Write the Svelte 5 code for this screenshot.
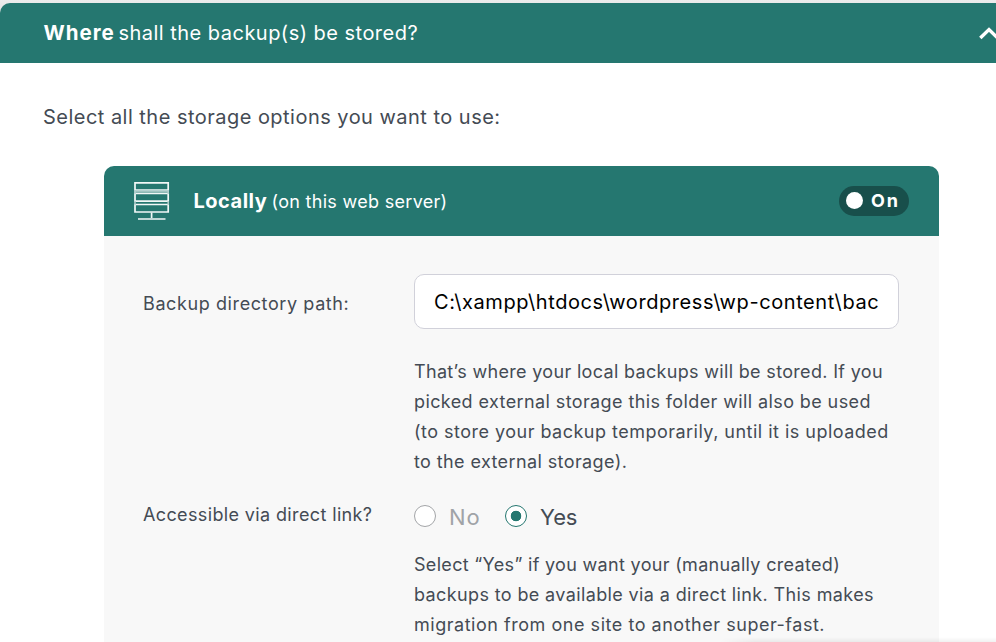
<script>
  let enabled = $state(true);
  let path = $state('C:\\xampp\\htdocs\\wordpress\\wp-content\\bac');
  let access = $state('yes');

  const pathHelp = [
    { text: 'That’s where your local backups will be stored. If you', track: 0.324 },
    { text: 'picked external storage this folder will also be used', track: 0.395 },
    { text: '(to store your backup temporarily, until it is uploaded', track: 0.481 },
    { text: 'to the external storage).', track: 0.396 }
  ];
  const linkHelp = [
    { text: 'Select “Yes” if you want your (manually created)', track: 0.317 },
    { text: 'backups to be available via a direct link. This makes', track: 0.375 },
    { text: 'migration from one site to another super-fast.', track: 0.53 }
  ];
</script>

<div class="page">
  <header class="section-head">
    <h2><strong>Where</strong><span>shall the backup(s) be stored?</span></h2>
    <svg class="chevron" width="20" height="14" viewBox="0 0 20 14">
      <path d="M1.3 11 L10 2.6 L18.7 11" fill="none" stroke="#fff" stroke-width="3.4" />
    </svg>
  </header>

  <main>
    <p class="intro">Select all the storage options you want to use:</p>

    <section class="card">
      <div class="card-head">
        <svg class="server" width="36" height="40" viewBox="0 0 36 40" fill="none" stroke="#f1f8f7">
          <path d="M1 1.8H34.2V9H1Z M1 12.5H34.2V20.2H1Z M1 23.5H34.2V31H1Z" stroke-width="1.7" />
          <path d="M0.2 10.8H35" stroke="#9fc4c1" stroke-width="2" />
          <path d="M1 9V13M34.2 9V13M1 20V24M34.2 20V24" stroke="#b5d1cf" stroke-width="1.5" />
          <path d="M17.6 31.5V37M4 38H31.5" stroke-width="1.7" />
        </svg>
        <h3><strong>Locally</strong><span>(on this web server)</span></h3>
        <button class="toggle" onclick={() => (enabled = !enabled)}>
          <i></i><span>{enabled ? 'On' : 'Off'}</span>
        </button>
      </div>

      <div class="card-body">
        <div class="row">
          <label class="name path-name" for="path">Backup directory path:</label>
          <div class="field">
            <input id="path" bind:value={path} />
            <div class="help">
              {#each pathHelp as line}
                <div style="letter-spacing:{line.track}px">{line.text}</div>
              {/each}
            </div>
          </div>
        </div>

        <div class="row link-row">
          <div class="name link-name">Accessible via direct link?</div>
          <div class="field">
            <div class="radios">
              <label class="no" class:checked={access === 'no'}>
                <input type="radio" name="access" value="no" bind:group={access} /><span>No</span>
              </label>
              <label class="yes" class:checked={access === 'yes'}>
                <input type="radio" name="access" value="yes" bind:group={access} /><span>Yes</span>
              </label>
            </div>
            <div class="help">
              {#each linkHelp as line}
                <div style="letter-spacing:{line.track}px">{line.text}</div>
              {/each}
            </div>
          </div>
        </div>
      </div>
    </section>
  </main>
  <div class="fade"></div>
</div>

<style>
  :global(body) { background: #fff; overflow: hidden; }
  .page {
    position: relative;
    box-sizing: border-box;
    width: 996px;
    height: 642px;
    padding-top: 3px;
    overflow: hidden;
    background: linear-gradient(#ececec, #e2e2e2) 0 0 / 100% 14px no-repeat, #fff;
    font-family: Inter, "Open Sans", sans-serif;
    color: #444b54;
    white-space: nowrap;
  }
  h2, h3, p { margin: 0; font-weight: 400; }
  .section-head {
    display: flex;
    align-items: center;
    justify-content: space-between;
    height: 60px;
    padding-left: 43.5px;
    background: #257770;
    border-top-left-radius: 10px;
    color: #fff;
  }
  h2, h3 { display: flex; align-items: baseline; }
  h2 { font-size: 20px; line-height: 60px; }
  h2 strong { width: 75px; font-size: 20.5px; letter-spacing: 1px; }
  h2 span { letter-spacing: 0.478px; }
  .chevron { flex: none; margin: 2px -3px 0 0; }
  main { padding: 39px 57px 0 43px; }
  .intro { font-size: 20px; line-height: 30px; letter-spacing: 0.474px; }
  .card { margin: 34px 0 0 61px; width: 835px; }
  .card-head {
    display: flex;
    align-items: center;
    height: 70px;
    box-sizing: border-box;
    padding: 0 30px 0 30px;
    background: #257770;
    border-radius: 10px 10px 0 0;
    color: #fff;
  }
  .server { flex: none; margin-right: 23.5px; }
  h3 { flex: 1; line-height: 70px; }
  h3 strong { width: 78px; font-size: 20px; letter-spacing: 0.5px; }
  h3 span { font-size: 18px; letter-spacing: 0.3px; }
  .toggle {
    display: flex;
    align-items: center;
    gap: 8px;
    width: 70px;
    height: 30px;
    padding: 0 0 0 7px;
    border: 0;
    border-radius: 15px;
    background: #184f4b;
    color: #fff;
    font: 700 18px/30px Inter, sans-serif;
    letter-spacing: 1.8px;
  }
  .toggle i { width: 17px; height: 17px; margin-top: -1px; border-radius: 50%; background: #fff; }
  .card-body { height: 420px; box-sizing: border-box; padding: 38px 40px 0 39px; background: #f8f8f8; }
  .row { display: flex; align-items: flex-start; }
  .name { width: 271px; font-size: 18px; line-height: 30px; }
  .path-name { padding-top: 15px; letter-spacing: 0.6px; }
  .link-name { padding-top: 1px; letter-spacing: 0.37px; }
  .field { width: 485px; }
  #path {
    display: block;
    box-sizing: border-box;
    width: 485px;
    height: 55px;
    margin-bottom: 28px;
    padding: 0 15px 0 19px;
    border: 1px solid #d1d1da;
    border-radius: 10px;
    background: #fff;
    color: #000;
    font: 400 20px Inter, sans-serif;
    letter-spacing: 0.577px;
    outline: none;
  }
  .help { font-size: 18px; line-height: 30px; }
  .link-row { margin-top: 22px; }
  .radios { display: flex; height: 35px; align-items: center; margin: -1px 0 17px; }
  .radios label { display: flex; align-items: center; gap: 13px; font-size: 22px; line-height: 30px; }
  .radios span { padding-top: 2px; }
  .radios input {
    appearance: none;
    flex: none;
    width: 22px;
    height: 22px;
    margin: 0;
    border: 1px solid #a3a5a8;
    border-radius: 50%;
    background: #fff;
  }
  .no { width: 91px; color: #a0a3a7; letter-spacing: 1px; }
  .yes { letter-spacing: -0.1px; }
  .radios .checked { color: #444b54; }
  .radios .checked input {
    border-color: #257770;
    background: radial-gradient(circle, #257770 0 5px, #fff 5.6px);
  }
  .fade {
    position: absolute;
    right: 0;
    bottom: 0;
    width: 276px;
    height: 5px;
    background: linear-gradient(to bottom, rgba(0, 0, 0, 0), rgba(0, 0, 0, 0.055));
    mask-image: linear-gradient(to right, transparent, #000 35px);
  }
</style>
